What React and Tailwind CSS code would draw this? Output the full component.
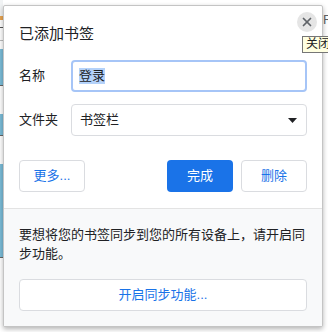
import { X } from 'lucide-react'

const FONT = "font-['Liberation_Sans','Noto_Sans_CJK_SC',sans-serif]"

// strip of the page that peeks out left of the bubble
const EDGE = [
  ['h-[16px]', 'bg-[#f1f3f4]'],
  ['h-[4px]', 'bg-[#e8a450]'],
  ['h-[7px]', 'bg-white'],
  ['h-px', 'bg-[#555]'],
  ['h-[12px]', 'bg-white'],
  ['h-px', 'bg-[#bbb]'],
  ['h-[8px]', 'bg-white'],
  ['h-[36px]', 'bg-[#7bbcd8]'],
  ['h-px', 'bg-[#666]'],
  ['h-[28px]', 'bg-white'],
  ['h-[21px]', 'bg-[#7bbcd8]'],
  ['h-px', 'bg-[#666]'],
  ['h-[28px]', 'bg-white'],
  ['h-[93px]', 'bg-[#7bbcd8]'],
  ['h-px', 'bg-[#666]'],
]

function Field({ label, children }) {
  return (
    <div className="flex items-center">
      <span className="w-[52px] text-[13px] text-[#202124]">{label}</span>
      {children}
    </div>
  )
}

function OutlineButton({ children, className = '' }) {
  return (
    <button className={`h-8 rounded-[4px] border border-[#dadce0] bg-white text-[13px] text-[#1a73e8] ${className}`}>
      {children}
    </button>
  )
}

export default function App() {
  return (
    <div className={`relative w-[328px] h-[332px] overflow-hidden bg-white ${FONT}`}>
      {/* page behind the bubble */}
      <div className="flex h-full justify-between">
        <div className="w-[3px] flex flex-col">
          {EDGE.map(([h, bg], i) => (
            <div key={i} className={`${h} ${bg}`} />
          ))}
        </div>
        <div className="w-[5px] pt-[12px] text-[13px] leading-4 text-[#5f6368] overflow-hidden">R</div>
      </div>

      {/* bookmark bubble */}
      <div className="absolute left-[3px] top-[5px] w-[320px] rounded-[2px] border border-[#c4c4c4] bg-white shadow-[0_2px_5px_rgba(0,0,0,0.3)]">
        <button className="absolute right-[5px] top-[6px] w-5 h-5 rounded-full bg-[#e5e5e5] flex items-center justify-center text-[#5f6368]">
          <X size={14} strokeWidth={3} />
        </button>

        <div className="px-[15px] pt-4 pb-4">
          <div className="text-[15px] leading-6 text-[#202124]">已添加书签</div>

          <div className="mt-[14px] flex flex-col gap-3">
            <Field label="名称">
              <div className="w-[236px] h-8 rounded-[4px] border-2 border-[#a6c5f7] flex items-center px-[6px]">
                <span className="text-[13px] leading-4 bg-[#b4d2fa] text-[#202124]">登录</span>
              </div>
            </Field>
            <Field label="文件夹">
              <div className="w-[236px] h-8 rounded-[4px] border border-[#dadce0] flex items-center justify-between pl-2 pr-[9px]">
                <span className="text-[13px] text-[#202124]">书签栏</span>
                <svg width="9" height="5" viewBox="0 0 9 5">
                  <path d="M0 0h9L4.5 5z" fill="#202124" />
                </svg>
              </div>
            </Field>
          </div>

          <div className="mt-6 flex items-center">
            <OutlineButton className="w-[66px]">更多...</OutlineButton>
            <div className="flex-1" />
            <button className="w-[66px] h-8 rounded-[4px] bg-[#1a73e8] text-[13px] text-white">完成</button>
            <OutlineButton className="w-[66px] ml-2">删除</OutlineButton>
          </div>
        </div>

        <div className="border-t border-[#e3e3e3] bg-[#f8f9fa] px-[15px] pt-4 pb-[15px]">
          <p className="text-[13px] leading-[19px] text-[#202124]">
            要想将您的书签同步到您的所有设备上，请开启同步功能。
          </p>
          <button className="mt-4 w-full h-8 rounded-[4px] border border-[#dadce0] bg-white text-[13px] text-[#1a73e8]">
            开启同步功能...
          </button>
        </div>
      </div>

      {/* tooltip */}
      <div className="absolute left-[302px] top-[36px] h-[17px] pl-[3px] pr-3 border border-[#767676] bg-[#ffffe1] text-[12px] leading-[15px] text-[#202124] whitespace-nowrap">
        关闭
      </div>
    </div>
  )
}
